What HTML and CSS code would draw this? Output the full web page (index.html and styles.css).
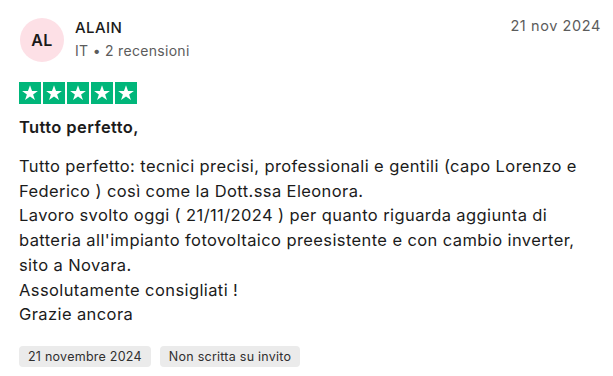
FILE: index.html
```html
<!DOCTYPE html>
<html lang="it">
<head>
<meta charset="utf-8">
<link rel="stylesheet" href="styles.css">
</head>
<body>
<article class="review">
  <header class="head">
    <div class="avatar">AL</div>
    <div class="who">
      <div class="name">ALAIN</div>
      <div class="meta">IT • 2 recensioni</div>
    </div>
    <time class="date">21 nov 2024</time>
  </header>
  <div class="stars">
    <span class="star"><svg viewBox="0 0 24 24"><path d="M12 3.6l2.2 6.1h6.4l-5.2 3.8 2 6.2L12 15.9l-5.4 3.8 2-6.2-5.2-3.8h6.4z" fill="#fff"/></svg></span>
    <span class="star"><svg viewBox="0 0 24 24"><path d="M12 3.6l2.2 6.1h6.4l-5.2 3.8 2 6.2L12 15.9l-5.4 3.8 2-6.2-5.2-3.8h6.4z" fill="#fff"/></svg></span>
    <span class="star"><svg viewBox="0 0 24 24"><path d="M12 3.6l2.2 6.1h6.4l-5.2 3.8 2 6.2L12 15.9l-5.4 3.8 2-6.2-5.2-3.8h6.4z" fill="#fff"/></svg></span>
    <span class="star"><svg viewBox="0 0 24 24"><path d="M12 3.6l2.2 6.1h6.4l-5.2 3.8 2 6.2L12 15.9l-5.4 3.8 2-6.2-5.2-3.8h6.4z" fill="#fff"/></svg></span>
    <span class="star"><svg viewBox="0 0 24 24"><path d="M12 3.6l2.2 6.1h6.4l-5.2 3.8 2 6.2L12 15.9l-5.4 3.8 2-6.2-5.2-3.8h6.4z" fill="#fff"/></svg></span>
  </div>
  <h2 class="title">Tutto perfetto,</h2>
  <p class="body">Tutto perfetto: tecnici precisi, professionali e gentili (capo Lorenzo e Federico ) così come la Dott.ssa Eleonora.<br>Lavoro svolto oggi ( 21/11/2024 ) per quanto riguarda aggiunta di batteria all'impianto fotovoltaico preesistente e con cambio inverter, sito a Novara.<br>Assolutamente consigliati !<br>Grazie ancora</p>
  <div class="tags">
    <span class="tag">21 novembre 2024</span>
    <span class="tag">Non scritta su invito</span>
  </div>
</article>
</body>
</html>
```
FILE: styles.css
```css
html, body { margin: 0; padding: 0; background: #fff; }
body { font-family: "Inter", "Liberation Sans", sans-serif; color: #1b1b1b; }
.review { padding: 16px 12px 0 19px; }
.head { display: flex; align-items: flex-start; }
.avatar {
  width: 44px; height: 44px; border-radius: 50%;
  background: #fde0e6; color: #1a1a1a;
  display: flex; align-items: center; justify-content: center;
  font-size: 16px; font-weight: 600; letter-spacing: 0.3px;
  margin-top: 2px; margin-left: 1px;
}
.who { margin-left: 11px; flex: 1; padding-top: 1.5px; }
.name { font-size: 15px; font-weight: 500; line-height: 20px; letter-spacing: 0.4px; color: #1b1b1b; }
.meta { font-size: 14px; line-height: 20px; margin-top: 3.5px; letter-spacing: 0.3px; color: #5c5c5c; }
.date { font-size: 14.5px; line-height: 20px; letter-spacing: 0.6px; color: #5c5c5c; }
.stars { display: flex; gap: 2px; margin-top: 20px; }
.star { width: 22px; height: 22px; background: #00b67a; display: flex; }
.star svg { width: 22px; height: 22px; }
.title { font-size: 16.5px; font-weight: 600; letter-spacing: 0.4px; margin: 10.5px 0 0; line-height: 24.75px; }
.body { font-size: 16.5px; letter-spacing: 0.4px; line-height: 24.75px; margin: 14.5px 12px 0 0; }
.tags { display: flex; gap: 9px; margin-top: 19px; }
.tag { font-size: 12.5px; line-height: 21px; letter-spacing: 0.25px; padding: 0 9px; background: #ebebeb; border-radius: 4px; color: #2f2f2f; }
```
